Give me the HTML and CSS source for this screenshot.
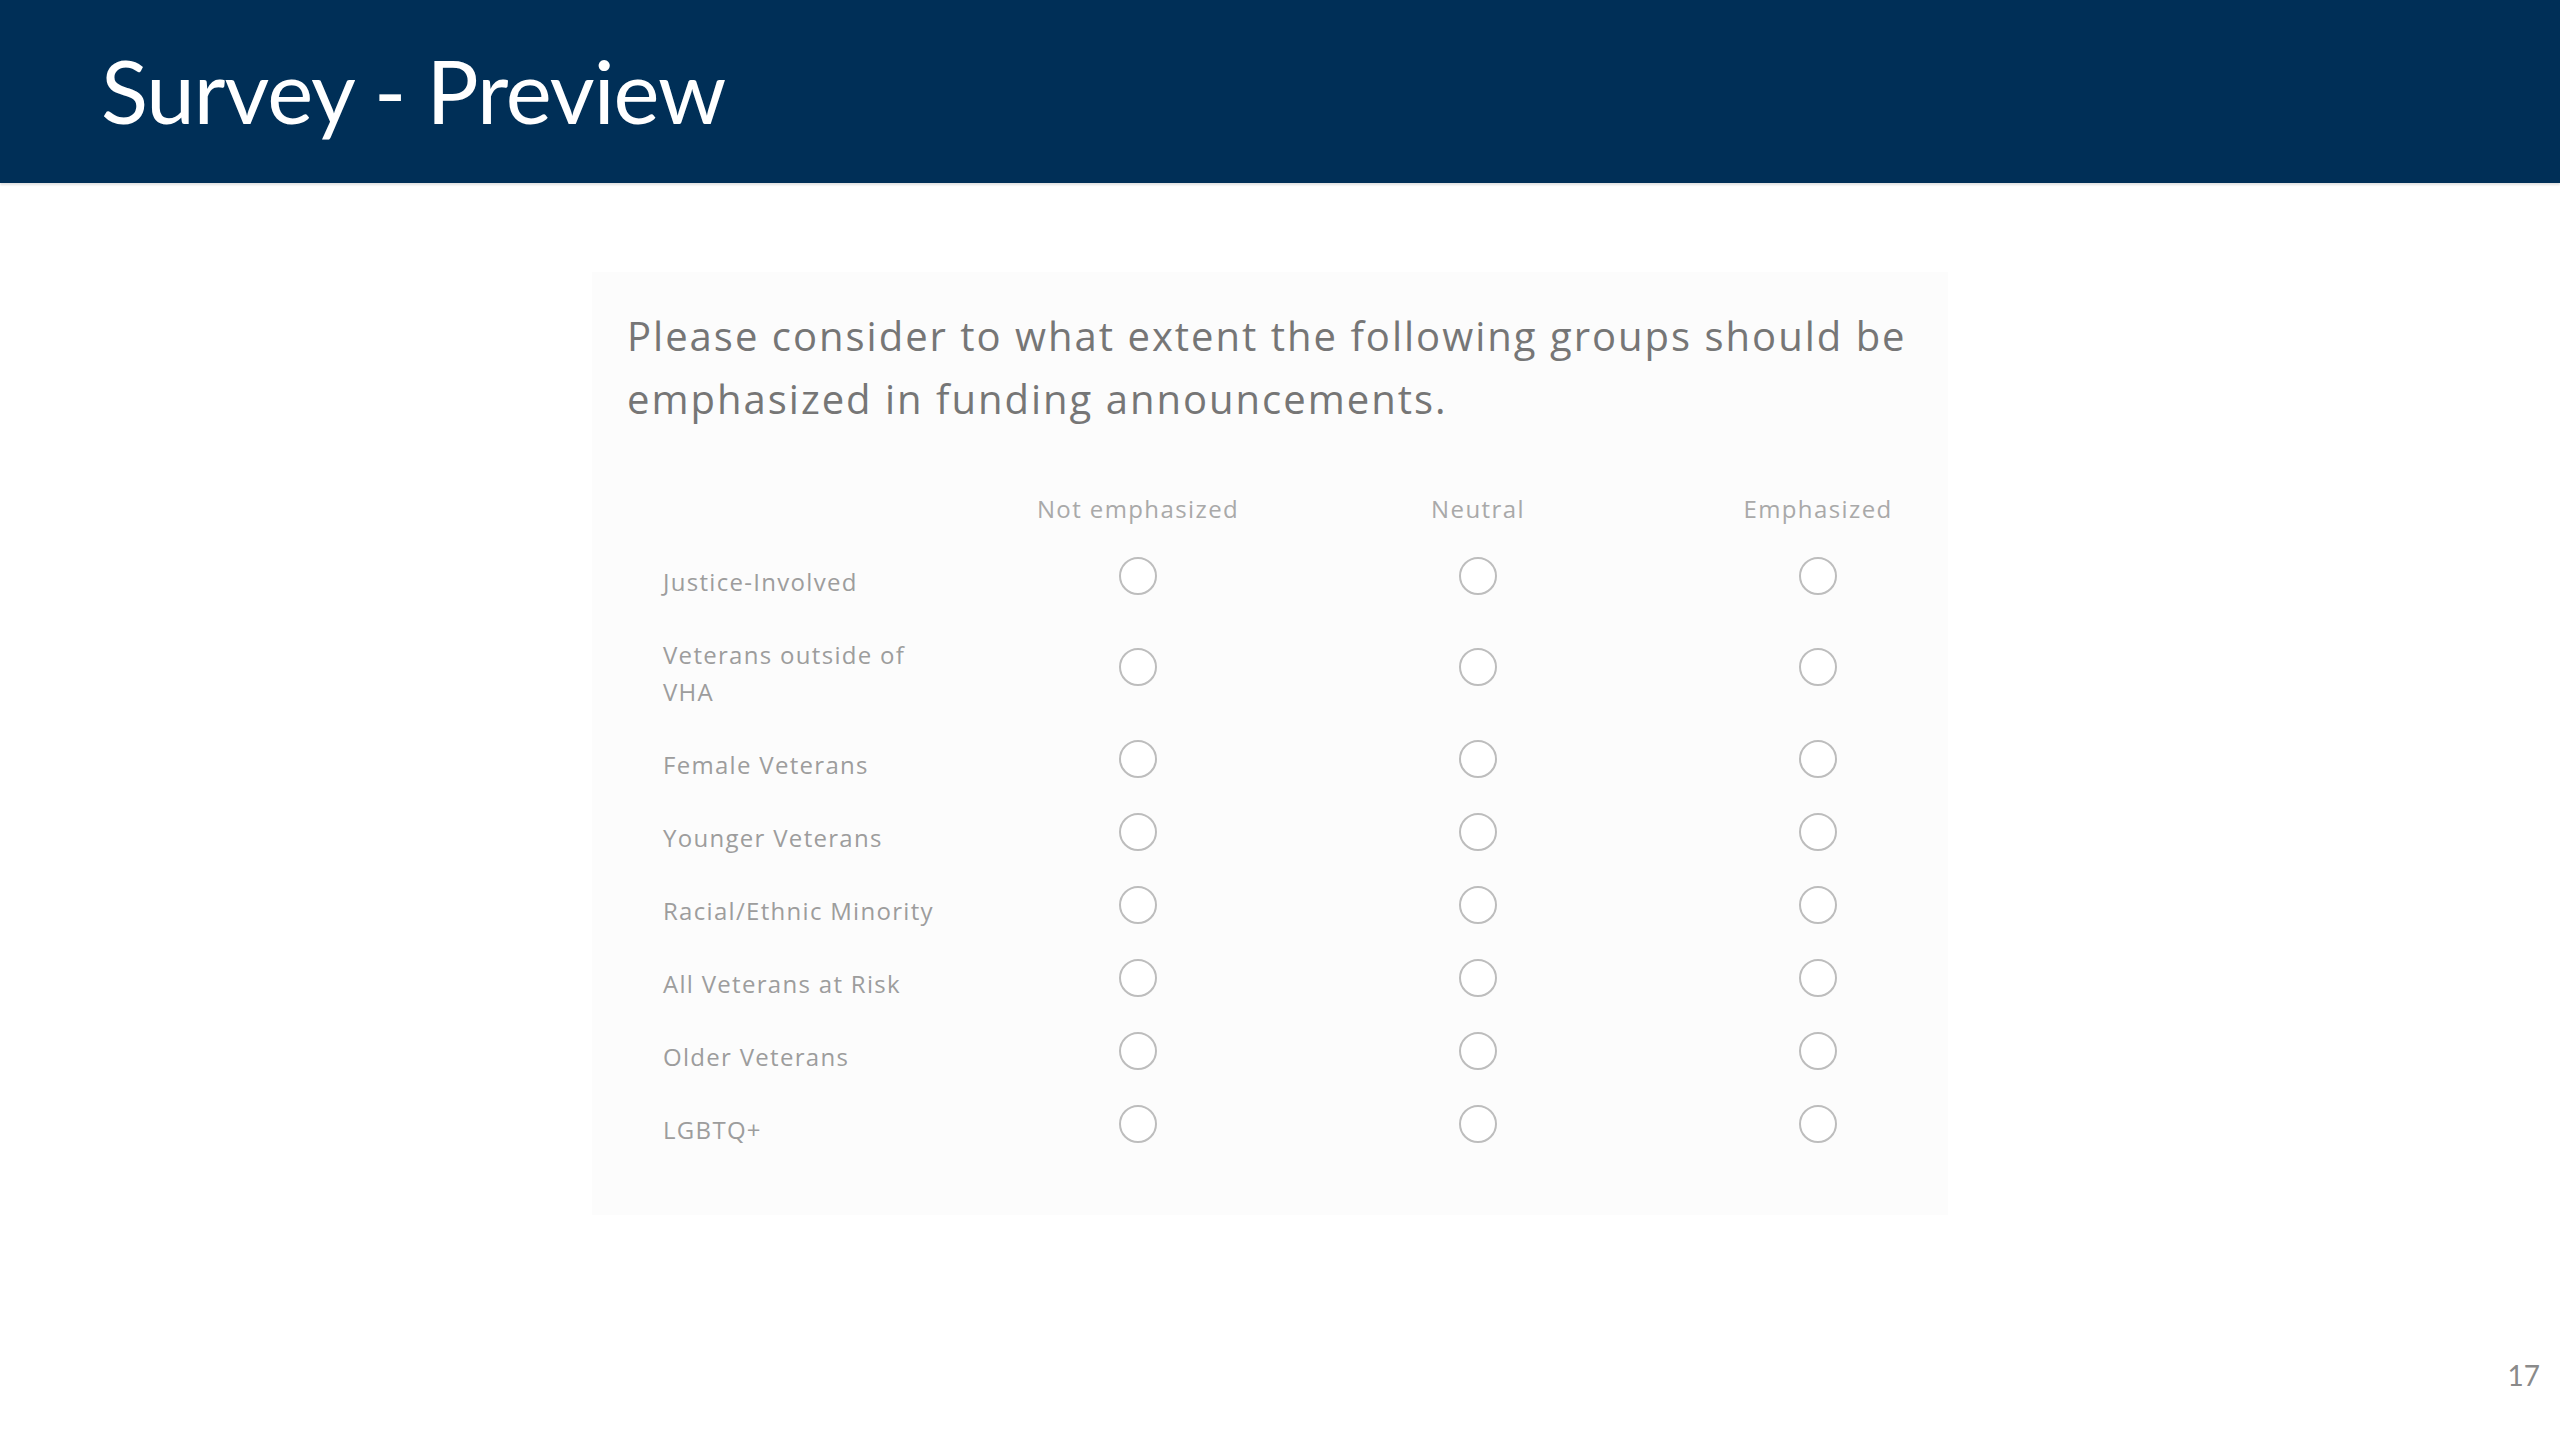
FILE: index.html
```html
<!DOCTYPE html>
<html lang="en">
<head>
<meta charset="utf-8">
<title>Survey - Preview</title>
<link rel="stylesheet" href="styles.css">
</head>
<body>
<div class="slide">
  <header class="banner">
    <h1 class="title">Survey - Preview</h1>
  </header>
  <main class="content">
    <section class="panel">
      <p class="question">Please consider to what extent the following groups should be emphasized in funding announcements.</p>
      <div class="matrix">
        <div class="row head">
          <div class="label"></div>
          <div class="col-title">Not emphasized</div>
          <div class="col-title">Neutral</div>
          <div class="col-title">Emphasized</div>
        </div>
        <div class="row">
          <div class="label"><span>Justice-Involved</span></div>
          <div class="opt"><span class="radio"></span></div>
          <div class="opt"><span class="radio"></span></div>
          <div class="opt"><span class="radio"></span></div>
        </div>
        <div class="row">
          <div class="label"><span>Veterans outside of VHA</span></div>
          <div class="opt"><span class="radio"></span></div>
          <div class="opt"><span class="radio"></span></div>
          <div class="opt"><span class="radio"></span></div>
        </div>
        <div class="row">
          <div class="label"><span>Female Veterans</span></div>
          <div class="opt"><span class="radio"></span></div>
          <div class="opt"><span class="radio"></span></div>
          <div class="opt"><span class="radio"></span></div>
        </div>
        <div class="row">
          <div class="label"><span>Younger Veterans</span></div>
          <div class="opt"><span class="radio"></span></div>
          <div class="opt"><span class="radio"></span></div>
          <div class="opt"><span class="radio"></span></div>
        </div>
        <div class="row">
          <div class="label"><span>Racial/Ethnic Minority</span></div>
          <div class="opt"><span class="radio"></span></div>
          <div class="opt"><span class="radio"></span></div>
          <div class="opt"><span class="radio"></span></div>
        </div>
        <div class="row">
          <div class="label"><span>All Veterans at Risk</span></div>
          <div class="opt"><span class="radio"></span></div>
          <div class="opt"><span class="radio"></span></div>
          <div class="opt"><span class="radio"></span></div>
        </div>
        <div class="row">
          <div class="label"><span>Older Veterans</span></div>
          <div class="opt"><span class="radio"></span></div>
          <div class="opt"><span class="radio"></span></div>
          <div class="opt"><span class="radio"></span></div>
        </div>
        <div class="row">
          <div class="label"><span>LGBTQ+</span></div>
          <div class="opt"><span class="radio"></span></div>
          <div class="opt"><span class="radio"></span></div>
          <div class="opt"><span class="radio"></span></div>
        </div>
      </div>
    </section>
  </main>
  <footer class="footer">
    <span class="page-num">17</span>
  </footer>
</div>
</body>
</html>
```
FILE: styles.css
```css
html, body {
  margin: 0;
  padding: 0;
  background: #ffffff;
}

.slide {
  width: 2560px;
  height: 1440px;
  display: flex;
  flex-direction: column;
  overflow: hidden;
  background: #ffffff;
}

.banner {
  height: 183px;
  flex: none;
  background: #002f57;
  display: flex;
  align-items: center;
  padding-left: 101px;
  box-shadow: 0 2px 2px rgba(0, 0, 0, 0.12);
}

.title {
  margin: 0;
  font-family: "Lato", "Noto Sans", sans-serif;
  font-weight: 400;
  font-size: 87px;
  line-height: 1;
  color: #ffffff;
  letter-spacing: -1px;
  padding-bottom: 2px;
}

.content {
  flex: none;
  display: flex;
  padding-top: 89px;
  padding-left: 592px;
}

.panel {
  width: 1356px;
  height: 943px;
  box-sizing: border-box;
  background: #fcfcfc;
  padding: 32px 0 0 35px;
  font-family: "Open Sans", "Noto Sans", sans-serif;
}

.question {
  margin: 0;
  width: 1320px;
  font-size: 40px;
  line-height: 63px;
  letter-spacing: 2px;
  color: #767676;
}

.matrix {
  margin-top: 60px;
  padding-left: 36px;
}

.row {
  display: grid;
  grid-template-columns: 305px 340px 340px 340px;
  align-items: center;
  padding: 12px 0;
}

.row.head {
  padding: 0 0 12px;
}

.label {
  padding-top: 12px;
  font-size: 24px;
  line-height: 37px;
  letter-spacing: 1.3px;
  color: #9d9d9d;
}

.head .label {
  padding-top: 0;
}

.label span {
  display: block;
  max-width: 275px;
}

.col-title {
  text-align: center;
  font-size: 24px;
  line-height: 37px;
  letter-spacing: 1.4px;
  color: #a9a9a9;
}

.opt {
  display: flex;
  justify-content: center;
  align-items: center;
}

.radio {
  width: 34px;
  height: 34px;
  border: 2px solid #bdbdbd;
  border-radius: 50%;
  background: #ffffff;
}

.footer {
  margin-top: auto;
  display: flex;
  justify-content: flex-end;
  padding: 0 20px 48px 0;
}

.page-num {
  font-family: "Lato", "Noto Sans", sans-serif;
  font-size: 28px;
  line-height: 34px;
  color: #8a8a8a;
}
```
